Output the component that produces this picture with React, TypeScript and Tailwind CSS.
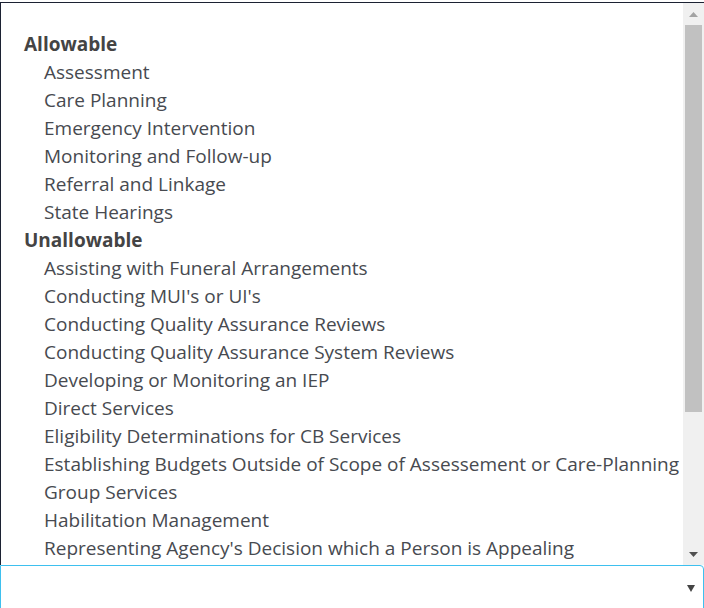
const groups = [
  {
    label: "Allowable",
    items: [
      "Assessment",
      "Care Planning",
      "Emergency Intervention",
      "Monitoring and Follow-up",
      "Referral and Linkage",
      "State Hearings",
    ],
  },
  {
    label: "Unallowable",
    items: [
      "Assisting with Funeral Arrangements",
      "Conducting MUI's or UI's",
      "Conducting Quality Assurance Reviews",
      "Conducting Quality Assurance System Reviews",
      "Developing or Monitoring an IEP",
      "Direct Services",
      "Eligibility Determinations for CB Services",
      "Establishing Budgets Outside of Scope of Assessement or Care-Planning",
      "Group Services",
      "Habilitation Management",
      "Representing Agency's Decision which a Person is Appealing",
    ],
  },
];

function Triangle({ up, color }: { up?: boolean; color: string }) {
  return (
    <svg width="9" height="5" viewBox="0 0 9 5">
      <polygon points={up ? "0,5 9,5 4.5,0" : "0,0 9,0 4.5,5"} fill={color} />
    </svg>
  );
}

export default function App() {
  return (
    <div
      className="w-[704px] h-[608px] overflow-hidden bg-white pt-[2px]"
      style={{ fontFamily: '"Open Sans", "Noto Sans", sans-serif' }}
    >
      <div className="flex h-[563px] border-l border-t border-[#1c2233]">
        <div className="flex-1 overflow-hidden pt-[27px] text-[19px] text-[#474a50]">
          {groups.map((g) => (
            <div key={g.label}>
              <div className="h-[28px] leading-[28px] pl-[23px] font-bold text-[#444]">
                {g.label}
              </div>
              {g.items.map((item) => (
                <div key={item} className="h-[28px] leading-[28px] pl-[43px] whitespace-nowrap">
                  {item}
                </div>
              ))}
            </div>
          ))}
        </div>
        <div className="w-[21px] bg-[#f0f0f0] flex flex-col items-center">
          <div className="h-[22px] flex items-center justify-center">
            <Triangle up color="#a3a3a3" />
          </div>
          <div className="w-[17px] h-[387px] bg-[#c1c1c1]" />
          <div className="flex-1" />
          <div className="h-[22px] flex items-center justify-center">
            <Triangle color="#505050" />
          </div>
        </div>
      </div>
      <div className="h-[60px] border border-[#3ec0ef] rounded-tr-[4px] flex items-start justify-end pt-[19px] pr-[8px]">
        <svg width="8" height="7" viewBox="0 0 8 7">
          <polygon points="0,0 8,0 4,7" fill="#444" />
        </svg>
      </div>
    </div>
  );
}
